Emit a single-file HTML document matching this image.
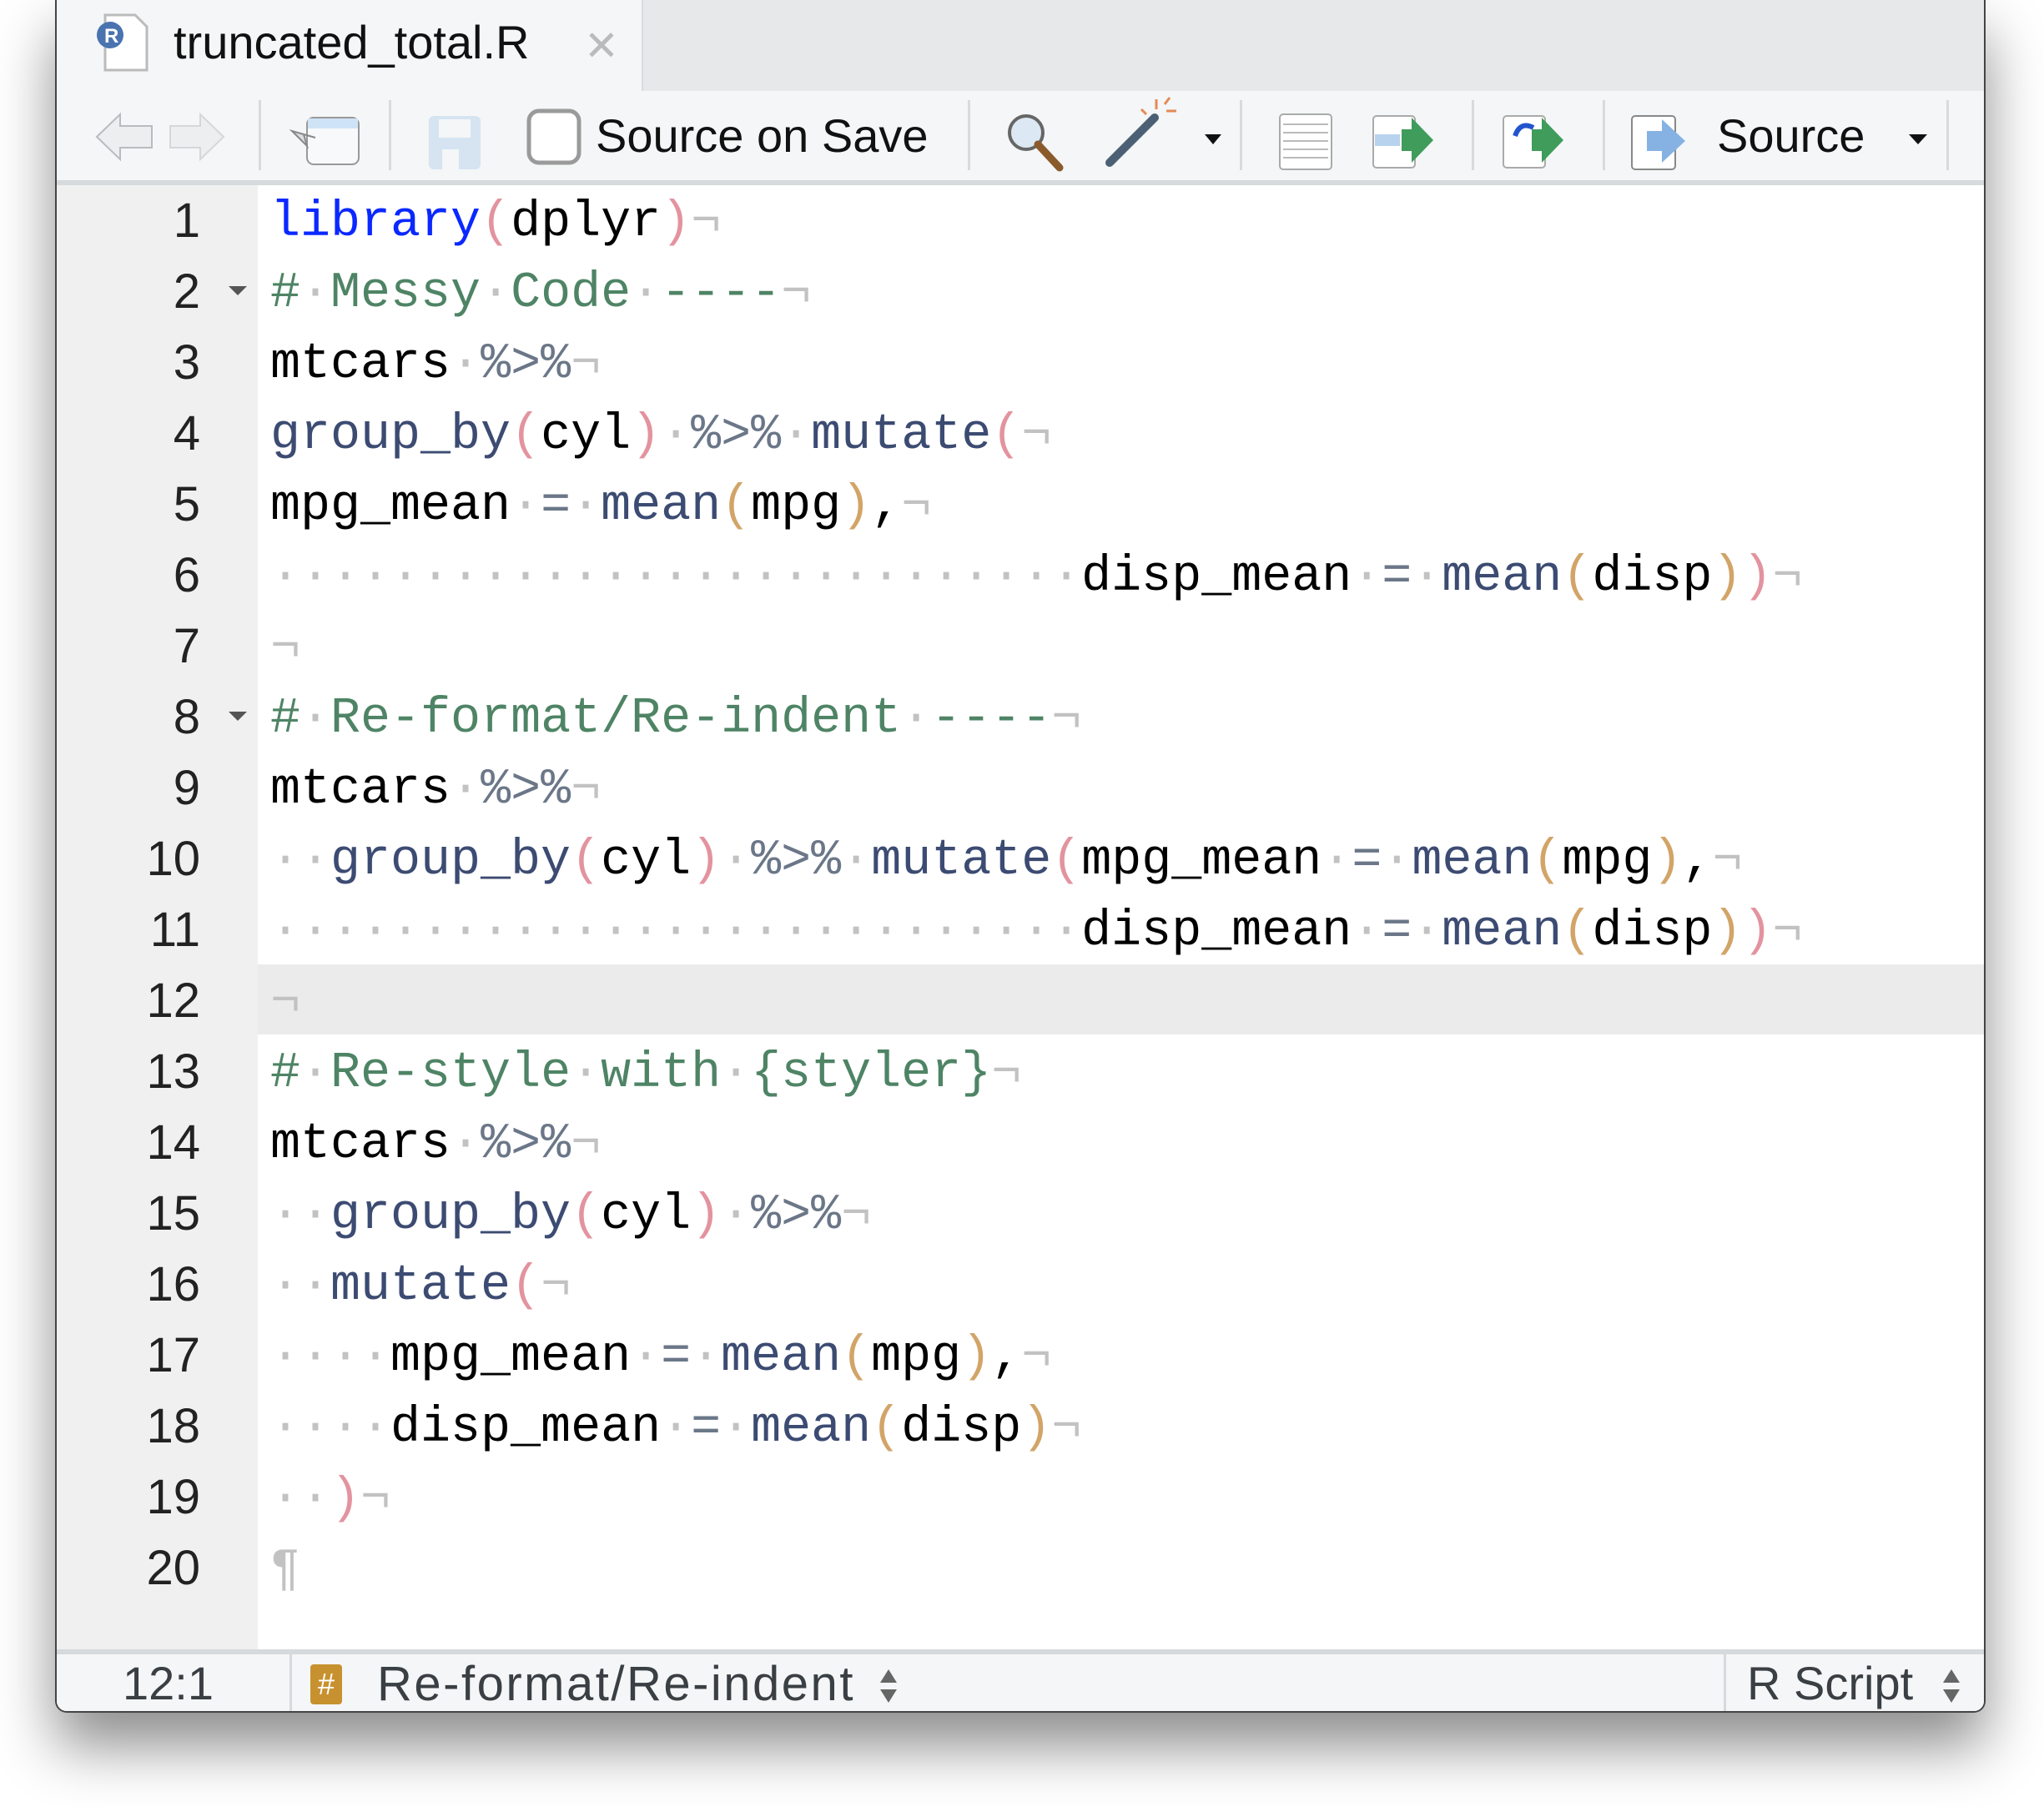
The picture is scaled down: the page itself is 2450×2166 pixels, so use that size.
<!DOCTYPE html>
<html><head><meta charset="utf-8"><style>
*{margin:0;padding:0;box-sizing:border-box}
body{width:2450px;height:2166px;background:#fff;position:relative;overflow:hidden;font-family:"Liberation Sans",sans-serif}
#win{position:absolute;left:66px;top:0;width:2314px;height:2053px;background:#fff;border:2px solid #444;border-top:none;border-radius:0 0 14px 14px;box-shadow:0 40px 70px rgba(0,0,0,0.45);overflow:hidden}
#tabbar{position:absolute;left:0;top:0;width:100%;height:109px;background:#e6e8ea}
#tab{position:absolute;left:0;top:0;width:703px;height:112px;background:#f4f6f7;border-right:2px solid #d9dcde}
#tab .t{position:absolute;left:140px;top:18px;font-size:56px;color:#111}
#tab .x{position:absolute;left:632px;top:26px;font-size:50px;color:#bbb}
#toolbar{position:absolute;left:0;top:109px;width:100%;height:107px;background:#f4f6f7}
#tbline{position:absolute;left:0;top:216px;width:100%;height:6px;background:#d6dadd}
.sep{position:absolute;top:120px;width:3px;height:84px;background:#d8dadc}
.lbl{position:absolute;font-size:56px;color:#111;top:130px}
#gutter{position:absolute;left:0;top:222px;width:241px;height:1755px;background:#f0f0f0}
#hl{position:absolute;left:241px;top:1156px;width:2100px;height:84px;background:#ebebeb}
.ln{position:absolute;left:0;width:172px;text-align:right;font-size:58px;color:#222;line-height:85px;height:85px}
#code{position:absolute;left:256px;top:225px;font-family:"Liberation Mono",monospace;font-size:60px;line-height:85px;white-space:pre;color:#000}
.k{color:#0a28ff}.f{color:#3c4b72}.c{color:#4e8465}.o{color:#6b7788}.p{color:#e3939f}.g{color:#d2a468}.w{color:#c2c2c2}
.fold{position:absolute;left:206px;width:0;height:0;border-left:11px solid transparent;border-right:11px solid transparent;border-top:11px solid #555}
#status{position:absolute;left:0;top:1977px;width:100%;height:76px;background:#f4f6f7;border-top:6px solid #d6dadd}
#status .s{position:absolute;top:2px;font-size:56px;color:#3a3f44}
</style></head><body>
<div id="win">
<div id="tabbar"></div>
<div id="tab">
<svg style="position:absolute;left:44px;top:14px" width="74" height="74" viewBox="0 0 74 74"><path d="M14 4h36l14 14v52H14z" fill="#fff" stroke="#bbb" stroke-width="3"/><circle cx="20" cy="28" r="16" fill="#4a73b0"/><text x="13" y="37" font-size="24" fill="#fff" font-family="Liberation Sans" font-weight="bold">R</text></svg>
<div class="t">truncated_total.R</div><div class="x">✕</div>
</div>
<div id="toolbar"></div>
<div id="tbline"></div>
<svg style="position:absolute;left:0;top:109px" width="2314" height="107">
<g fill="#eceeef" stroke="#b9bcbf" stroke-width="2">
<path d="M48 55 L76 28 L76 42 L114 42 L114 68 L76 68 L76 82 Z"/>
<path d="M200 55 L172 28 L172 42 L136 42 L136 68 L172 68 L172 82 Z" stroke="#d5d7d9"/>
</g>
<rect x="300" y="32" width="62" height="56" rx="8" fill="#f8f9fa" stroke="#999" stroke-width="2"/><rect x="301" y="33" width="60" height="12" fill="#cfe3f7"/>
<path d="M282 48 L300 66 L296 52 L310 56 Z" fill="#ddd" stroke="#888" stroke-width="2"/>
<rect x="446" y="30" width="62" height="64" rx="6" fill="#d6e4f1"/><rect x="458" y="34" width="38" height="22" fill="#f4f6f7"/><rect x="462" y="70" width="20" height="24" fill="#f4f6f7"/>
<rect x="566" y="24" width="60" height="62" rx="12" fill="#fff" stroke="#9a9a9a" stroke-width="5"/>
<circle cx="1162" cy="50" r="20" fill="#dce8f3" stroke="#666" stroke-width="4"/><path d="M1176 64 L1202 92" stroke="#8b5a2b" stroke-width="9" stroke-linecap="round"/>
<path d="M1262 86 L1316 32" stroke="#4b6074" stroke-width="10" stroke-linecap="round"/><path d="M1318 10v12M1330 24h12M1300 22l6 6M1334 8l-6 8" stroke="#e58a55" stroke-width="3"/>
<path d="M1376 52h20l-10 12z" fill="#111"/>
<rect x="1466" y="28" width="62" height="66" rx="4" fill="#fff" stroke="#aaa" stroke-width="2"/><g stroke="#bbb" stroke-width="2"><path d="M1470 40h54M1470 50h54M1470 60h54M1470 70h54M1470 80h54"/></g>
<rect x="1578" y="30" width="50" height="62" rx="4" fill="#fff" stroke="#aaa" stroke-width="2"/><rect x="1580" y="52" width="30" height="14" fill="#b8d3ee"/><path d="M1612 46h12v-14l26 27-26 27v-14h-12z" fill="#3f9c5b"/>
<rect x="1734" y="30" width="50" height="62" rx="4" fill="#fff" stroke="#aaa" stroke-width="2"/><path d="M1748 54 q6-18 22-10" stroke="#2255cc" stroke-width="6" fill="none"/><path d="M1768 46h12v-14l26 27-26 27v-14h-12z" fill="#3f9c5b"/>
<rect x="1888" y="30" width="52" height="64" rx="4" fill="#fff" stroke="#888" stroke-width="2"/><path d="M1906 48h18v-14l28 26-28 26v-14h-18z" fill="#86b2e3"/>
<path d="M2220 52h22l-11 12z" fill="#111"/>
</svg>
<div class="sep" style="left:242px"></div><div class="sep" style="left:398px"></div><div class="sep" style="left:1092px"></div><div class="sep" style="left:1418px"></div><div class="sep" style="left:1696px"></div><div class="sep" style="left:1853px"></div><div class="sep" style="left:2265px"></div>
<div class="lbl" style="left:646px">Source on Save</div>
<div class="lbl" style="left:1990px">Source</div>
<div id="gutter"></div>
<div id="hl"></div>
<div class="ln" style="top:222px">1</div><div class="ln" style="top:307px">2</div><div class="ln" style="top:392px">3</div><div class="ln" style="top:477px">4</div><div class="ln" style="top:562px">5</div><div class="ln" style="top:647px">6</div><div class="ln" style="top:732px">7</div><div class="ln" style="top:817px">8</div><div class="ln" style="top:902px">9</div><div class="ln" style="top:987px">10</div><div class="ln" style="top:1072px">11</div><div class="ln" style="top:1157px">12</div><div class="ln" style="top:1242px">13</div><div class="ln" style="top:1327px">14</div><div class="ln" style="top:1412px">15</div><div class="ln" style="top:1497px">16</div><div class="ln" style="top:1582px">17</div><div class="ln" style="top:1667px">18</div><div class="ln" style="top:1752px">19</div><div class="ln" style="top:1837px">20</div>
<div class="fold" style="top:343px"></div><div class="fold" style="top:853px"></div>
<div id="code"><span class="k">library</span><span class="p">(</span>dplyr<span class="p">)</span><span class="w">¬</span>
<span class="c">#</span><span class="w">·</span><span class="c">Messy</span><span class="w">·</span><span class="c">Code</span><span class="w">·</span><span class="c">----</span><span class="w">¬</span>
mtcars<span class="w">·</span><span class="o">%&gt;%</span><span class="w">¬</span>
<span class="f">group_by</span><span class="p">(</span>cyl<span class="p">)</span><span class="w">·</span><span class="o">%&gt;%</span><span class="w">·</span><span class="f">mutate</span><span class="p">(</span><span class="w">¬</span>
mpg_mean<span class="w">·</span><span class="o">=</span><span class="w">·</span><span class="f">mean</span><span class="g">(</span>mpg<span class="g">)</span>,<span class="w">¬</span>
<span class="w">···························</span>disp_mean<span class="w">·</span><span class="o">=</span><span class="w">·</span><span class="f">mean</span><span class="g">(</span>disp<span class="g">)</span><span class="p">)</span><span class="w">¬</span>
<span class="w">¬</span>
<span class="c">#</span><span class="w">·</span><span class="c">Re-format/Re-indent</span><span class="w">·</span><span class="c">----</span><span class="w">¬</span>
mtcars<span class="w">·</span><span class="o">%&gt;%</span><span class="w">¬</span>
<span class="w">··</span><span class="f">group_by</span><span class="p">(</span>cyl<span class="p">)</span><span class="w">·</span><span class="o">%&gt;%</span><span class="w">·</span><span class="f">mutate</span><span class="p">(</span>mpg_mean<span class="w">·</span><span class="o">=</span><span class="w">·</span><span class="f">mean</span><span class="g">(</span>mpg<span class="g">)</span>,<span class="w">¬</span>
<span class="w">···························</span>disp_mean<span class="w">·</span><span class="o">=</span><span class="w">·</span><span class="f">mean</span><span class="g">(</span>disp<span class="g">)</span><span class="p">)</span><span class="w">¬</span>
<span class="w">¬</span>
<span class="c">#</span><span class="w">·</span><span class="c">Re-style</span><span class="w">·</span><span class="c">with</span><span class="w">·</span><span class="c">{styler}</span><span class="w">¬</span>
mtcars<span class="w">·</span><span class="o">%&gt;%</span><span class="w">¬</span>
<span class="w">··</span><span class="f">group_by</span><span class="p">(</span>cyl<span class="p">)</span><span class="w">·</span><span class="o">%&gt;%</span><span class="w">¬</span>
<span class="w">··</span><span class="f">mutate</span><span class="p">(</span><span class="w">¬</span>
<span class="w">····</span>mpg_mean<span class="w">·</span><span class="o">=</span><span class="w">·</span><span class="f">mean</span><span class="g">(</span>mpg<span class="g">)</span>,<span class="w">¬</span>
<span class="w">····</span>disp_mean<span class="w">·</span><span class="o">=</span><span class="w">·</span><span class="f">mean</span><span class="g">(</span>disp<span class="g">)</span><span class="w">¬</span>
<span class="w">··</span><span class="p">)</span><span class="w">¬</span>
<span class="w">¶</span></div>
<div id="status">
<div class="s" style="left:79px">12:1</div>
<div style="position:absolute;left:279px;top:0;width:3px;height:76px;background:#d6dadd"></div>
<div style="position:absolute;left:304px;top:12px;width:38px;height:48px;background:#c8912f;border-radius:4px;color:#fff;font-size:36px;text-align:center;line-height:48px">#</div>
<div class="s" style="left:384px;font-size:58px;letter-spacing:2.5px">Re-format/Re-indent</div>
<svg style="position:absolute;left:982px;top:16px" width="30" height="44"><path d="M15 2l10 16H5zM15 42l10-16H5z" fill="#666"/></svg>
<div style="position:absolute;left:1998px;top:0;width:3px;height:76px;background:#d6dadd"></div>
<div class="s" style="left:2026px">R Script</div>
<svg style="position:absolute;left:2256px;top:16px" width="30" height="44"><path d="M15 2l10 16H5zM15 42l10-16H5z" fill="#666"/></svg>
</div>
</div>
</body></html>
